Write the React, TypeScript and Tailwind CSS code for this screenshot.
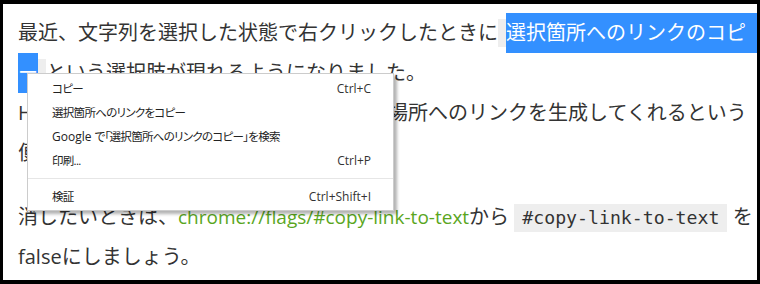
export default function App() {
  const items: { label: React.ReactNode; key: string; shortcut?: string }[] = [
    { key: "copy", label: "コピー", shortcut: "Ctrl+C" },
    { key: "link", label: "選択箇所へのリンクをコピー" },
    {
      key: "google",
      label: (
        <>
          <span className="text-[12px] tracking-normal">Google </span>
          で「選択箇所へのリンクのコピー」を検索
        </>
      ),
    },
    { key: "print", label: "印刷...", shortcut: "Ctrl+P" },
  ];
  return (
    <div className="w-[760px] h-[284px] bg-black pt-[4px] pl-[3px] pr-[3px] pb-[4px]">
      <div className="relative w-full h-full bg-white overflow-hidden">
        <div className="pt-[9px] pl-[15px] text-[20px] leading-[40px] text-[#333] font-['Open_Sans','Noto_Sans_CJK_JP',sans-serif]">
          <div className="flex h-10 whitespace-nowrap">
            <span>最近、文字列を選択した状態で右クリックしたときに</span>
            <span className="self-center h-7 w-2 bg-[#eeeeee]" />
            <span className="flex-1 bg-[#3390ff] text-white">選択箇所へのリンクのコピ</span>
          </div>
          <div className="flex h-10 whitespace-nowrap">
            <span className="w-5 bg-[#3390ff] text-white">ー</span>
            <span className="self-center h-7 w-2 bg-[#eeeeee]" />
            <span>という選択肢が現れるようになりました。</span>
          </div>
          <div className="flex h-10 whitespace-nowrap">
            <span className="w-[370px] overflow-hidden">HTMLページ内の特定の</span>
            <span>場所へのリンクを生成してくれるという</span>
          </div>
          <div className="h-10 whitespace-nowrap">便利な機能です。</div>
          <div className="mt-6 h-10 whitespace-nowrap">
            消したいときは、
            <a className="text-[#5aa61e] text-[19px]">chrome://flags/#copy-link-to-text</a>
            から{" "}
            <code className="inline-block px-2 leading-7 bg-[#eeeeee] text-[#333] text-[18.2px] font-['DejaVu_Sans_Mono',monospace]">
              #copy-link-to-text
            </code>{" "}
            を
          </div>
          <div className="h-10 whitespace-nowrap">falseにしましょう。</div>
        </div>

        <div className="absolute left-[24px] top-[69px] w-[367px] bg-white border border-[#cccccc] shadow-[3px_3px_3px_rgba(0,0,0,0.3)] pt-[3px] pb-[1px] text-[12px] text-[#222] font-['Open_Sans','Noto_Sans_CJK_JP',sans-serif]">
          {items.map((it) => (
            <div key={it.key} className="flex h-6 items-center justify-between pl-6 pr-[22px]">
              <span className="text-[11.5px] tracking-[-0.7px] [font-feature-settings:'palt']">{it.label}</span>
              {it.shortcut && <span className="text-[#333]">{it.shortcut}</span>}
            </div>
          ))}
          <div className="mt-[5px] mb-[6px] h-px bg-[#e6e6e6]" />
          <div className="flex h-6 items-center justify-between pl-6 pr-[22px]">
            <span className="text-[11.5px] tracking-[-0.7px]">検証</span>
            <span className="text-[#333]">Ctrl+Shift+I</span>
          </div>
        </div>
      </div>
    </div>
  );
}
